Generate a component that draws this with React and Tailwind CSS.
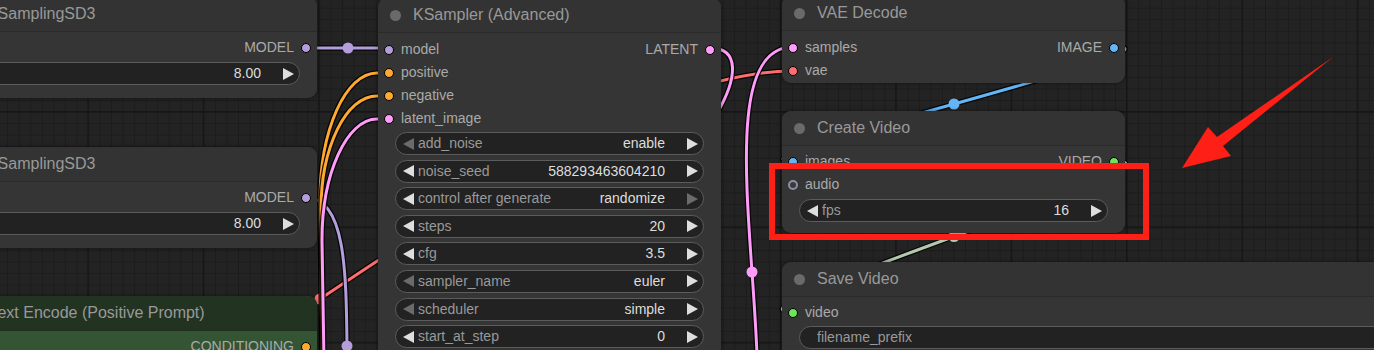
import React from "react";

const slot = {
  model: "bg-[#b39ddb]",
  cond: "bg-[#ffa931]",
  latent: "bg-[#ff9cf9]",
  vae: "bg-[#ff6e6e]",
  image: "bg-[#64b5f6]",
  video: "bg-[#6fe35c]",
};

// links drawn under the nodes, same bezier shape litegraph uses
const links = [
  { c: "#ff6e6e", d: "M-153 527 C109.5 527 530.5 71 793 71", dot: [320, 299] },
  { c: "#b39ddb", d: "M307 198 C383.7 198 310.3 494 387 494", dot: [347, 346] },
  { c: "#ffa931", d: "M322 360 L320 200 C320 130 345.5 73 377 73 L389 73" },
  { c: "#ffa931", d: "M323 360 L321 210 C321 147 346 96 377 96 L389 96" },
  { c: "#ff9cf9", d: "M324 360 L322 240 C322 173 347 119 377 119 L389 119" },
  { c: "#b39ddb", d: "M307 48 L389 48", dot: [348, 48] },
  { c: "#ff9cf9", d: "M710 48 C740 48 738 78 716 115" },
  { c: "#ff9cf9", d: "M711 497 C825 497 679 47 793 47", dot: [752, 272] },
  { c: "#64b5f6", d: "M1115 47 C1200 47 708 161 793 161", dot: [954, 104] },
  { c: "#b5c7ae", d: "M1115 161 C1204 161 704 312 793 312", dot: [954, 236.5] },
];

function Canvas() {
  return (
    <svg className="absolute inset-0" width="1374" height="350">
      <defs>
        <pattern id="minor" width="11.54" height="11.54" x="7.2" y="7.7" patternUnits="userSpaceOnUse">
          <path d="M0 0.5 H11.54 M0.5 0 V11.54" stroke="#1c1c1c" strokeWidth="1" fill="none" />
        </pattern>
        <pattern id="major" width="115.4" height="115.4" x="87.4" y="-4.4" patternUnits="userSpaceOnUse">
          <path d="M0 0.7 H115.4 M0.7 0 V115.4" stroke="#161616" strokeWidth="1.5" fill="none" />
        </pattern>
      </defs>
      <rect width="1374" height="350" fill="#232323" />
      <rect width="1374" height="350" fill="url(#minor)" />
      <rect width="1374" height="350" fill="url(#major)" />
      {links.map((l, i) => (
        <g key={i}>
          <path d={l.d} fill="none" stroke="#000" strokeWidth="5.5" strokeOpacity="0.85" />
          <path d={l.d} fill="none" stroke={l.c} strokeWidth="3" />
          {l.dot && <circle cx={l.dot[0]} cy={l.dot[1]} r="5.5" fill={l.c} />}
        </g>
      ))}
    </svg>
  );
}

function Arrow({ dir, dim }) {
  return (
    <svg width="11" height="12" viewBox="0 0 11 12" className={dim ? "fill-[#6b6b6b]" : "fill-[#dedede]"}>
      {dir === "left" ? <path d="M0 6 L11 0 L11 12 Z" /> : <path d="M11 6 L0 0 L0 12 Z" />}
    </svg>
  );
}

function Widget({ label, value, leftDim, rightDim }) {
  return (
    <div className="flex h-[23px] items-center rounded-full border border-[#5c5c5c] bg-[#222] pl-[7px] pr-[5px] text-[14px]">
      <Arrow dir="left" dim={leftDim} />
      <span className="ml-[4px] text-[#999]">{label}</span>
      <span className="ml-auto text-[#ddd]">{value}</span>
      <span className="ml-[22px] flex">
        <Arrow dir="right" dim={rightDim} />
      </span>
    </div>
  );
}

function Dot({ c, hollow }) {
  if (hollow)
    return <span className="block h-[10px] w-[10px] rounded-full border-[2.5px] border-[#8e8ea6] bg-[#3a3a3a]" />;
  return <span className={`block h-[10px] w-[10px] rounded-full border border-black ${c}`} />;
}

function Row({ input, output }) {
  return (
    <div className="flex h-[23px] items-center justify-between text-[14px] text-[#aaa]">
      {input ? (
        <div className="flex items-center pl-[6px]">
          <Dot c={input.c} hollow={input.hollow} />
          <span className="ml-[7px]">{input.label}</span>
        </div>
      ) : (
        <div />
      )}
      {output && (
        <div className="flex items-center pr-[6px]">
          <span className="mr-[7px]">{output.label}</span>
          <Dot c={output.c} />
        </div>
      )}
    </div>
  );
}

function Node({ pos, title, green, pt = "pt-[4px]", children }) {
  return (
    <div
      className={`absolute overflow-hidden rounded-[9px] shadow-[0_0_4px_rgba(0,0,0,0.45)] ${pos} ${
        green ? "bg-[#335533]" : "bg-[#353535]"
      }`}
    >
      <div
        className={`flex h-[35px] items-center border-b pl-[12px] ${
          green ? "border-[#1f2e1f] bg-[#223322]" : "border-[#2b2b2b] bg-[#333333]"
        }`}
      >
        <span className="block h-[11px] w-[11px] rounded-full bg-[#6a6a6a]" />
        <span className="ml-[12px] text-[16px] text-[#999]">{title}</span>
      </div>
      <div className={pt}>{children}</div>
    </div>
  );
}

export default function App() {
  return (
    <div className="relative h-[350px] w-[1374px] overflow-hidden bg-[#232323] font-['Liberation_Sans',Arial,sans-serif]">
      <Canvas />

      <Node pos="left-[-81px] top-[-3px] w-[398px] h-[101px]" title="ModelSamplingSD3">
        <Row output={{ label: "MODEL", c: slot.model }} />
        <div className="mt-[3px] px-[17px]">
          <Widget label="shift" value="8.00" />
        </div>
      </Node>

      <Node pos="left-[-81px] top-[147px] w-[398px] h-[101px]" title="ModelSamplingSD3">
        <Row output={{ label: "MODEL", c: slot.model }} />
        <div className="mt-[3px] px-[17px]">
          <Widget label="shift" value="8.00" />
        </div>
      </Node>

      <Node pos="left-[-85px] top-[296px] w-[402px] h-[120px]" title="CLIP Text Encode (Positive Prompt)" green>
        <Row output={{ label: "CONDITIONING", c: slot.cond }} />
      </Node>

      <Node pos="left-[378px] top-[-2px] w-[343px] h-[400px]" title="KSampler (Advanced)" pt="pt-[5px]">
        <Row input={{ label: "model", c: slot.model }} output={{ label: "LATENT", c: slot.latent }} />
        <Row input={{ label: "positive", c: slot.cond }} />
        <Row input={{ label: "negative", c: slot.cond }} />
        <Row input={{ label: "latent_image", c: slot.latent }} />
        <div className="mt-[2px] flex flex-col gap-[4.6px] px-[17px]">
          <Widget label="add_noise" value="enable" leftDim />
          <Widget label="noise_seed" value="588293463604210" />
          <Widget label="control after generate" value="randomize" rightDim />
          <Widget label="steps" value="20" />
          <Widget label="cfg" value="3.5" />
          <Widget label="sampler_name" value="euler" leftDim />
          <Widget label="scheduler" value="simple" leftDim />
          <Widget label="start_at_step" value="0" />
          <Widget label="end_at_step" value="10000" />
        </div>
      </Node>

      <Node pos="left-[782px] top-[-4px] w-[343px] h-[87px]" title="VAE Decode" pt="pt-[5px]">
        <Row input={{ label: "samples", c: slot.latent }} output={{ label: "IMAGE", c: slot.image }} />
        <Row input={{ label: "vae", c: slot.vae }} />
      </Node>

      <Node pos="left-[782px] top-[111px] w-[343px] h-[122px]" title="Create Video">
        <Row input={{ label: "images", c: slot.image }} output={{ label: "VIDEO", c: slot.video }} />
        <Row input={{ label: "audio", hollow: true }} />
        <div className="mt-[3px] px-[17px]">
          <Widget label="fps" value="16" />
        </div>
      </Node>

      <Node pos="left-[782px] top-[262px] w-[700px] h-[200px]" title="Save Video">
        <Row input={{ label: "video", c: slot.video }} />
        <div className="mt-[2px] px-[17px]">
          <div className="flex h-[23px] items-center rounded-full border border-[#5c5c5c] bg-[#222] pl-[17px] text-[14px] text-[#999]">
            filename_prefix
          </div>
        </div>
      </Node>

      {/* annotation */}
      <div className="absolute left-[769px] top-[163px] h-[77px] w-[380px] border-[6px] border-[#fe1f17]" />
      <svg className="absolute left-0 top-0" width="1374" height="350">
        <polygon
          points="1182,168 1208,127 1217,137 1333,57 1223,146 1231,156"
          fill="#fe1f17"
        />
      </svg>
    </div>
  );
}
